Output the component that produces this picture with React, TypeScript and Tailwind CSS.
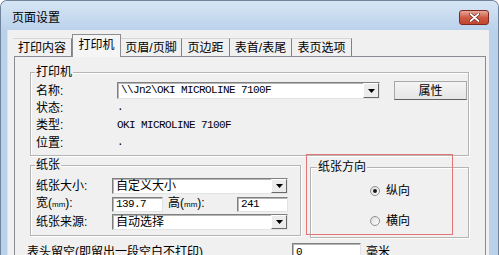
import React from 'react';

const cjk = "font-['Liberation_Sans','Noto_Sans_CJK_SC',sans-serif]";
const mono = "font-['Liberation_Mono','Courier_New',monospace] text-[11px] tracking-[-0.6px]";

const DropBtn: React.FC = () => (
  <div className="flex h-full w-[16px] items-center justify-center border-t border-l border-t-white border-l-white border-r border-b border-r-[#696969] border-b-[#696969] bg-[#ececec]">
    <svg width="7" height="4" viewBox="0 0 7 4">
      <path d="M0 0h7L3.5 4z" fill="#000" />
    </svg>
  </div>
);

interface FieldProps {
  w: string;
  h?: string;
  text: string;
  monoText?: boolean;
  drop?: boolean;
}

const Field: React.FC<FieldProps> = ({ w, h = 'h-[16px]', text, monoText, drop }) => (
  <div
    className={`flex ${w} ${h} items-stretch border border-t-[#808080] border-l-[#808080] border-r-[#e3e3e3] border-b-[#e3e3e3] bg-white shadow-[inset_1px_1px_0_#b5b5b5]`}
  >
    <div className={`flex flex-1 items-center overflow-hidden whitespace-nowrap pl-[3px] ${monoText ? mono : `${cjk} text-[12px]`} text-black`}>
      {text}
    </div>
    {drop && <DropBtn />}
  </div>
);

const GroupLabel: React.FC<{ text: string; left: string }> = ({ text, left }) => (
  <div className={`absolute top-[-8px] ${left} bg-[#f0f0f0] px-[1px] text-[12px] leading-[14px] text-black`}>{text}</div>
);

const Radio: React.FC<{ checked?: boolean; label: string }> = ({ checked, label }) => (
  <div className="flex h-[20px] items-center gap-[6px] pl-[59px]">
    <span className="flex h-[10px] w-[10px] items-center justify-center rounded-full border border-[#8f8f8f] bg-linear-to-br from-[#dcdcdc] to-white">
      {checked && <span className="h-[4px] w-[4px] rounded-full bg-[#1a1a1a]" />}
    </span>
    <span className="text-[12px] leading-[14px] text-black">{label}</span>
  </div>
);

const tabs = [
  { label: '打印内容', w: 'w-[59px]' },
  { label: '打印机', w: 'w-[49px]', active: true },
  { label: '页眉/页脚', w: 'w-[61px]' },
  { label: '页边距', w: 'w-[48px]' },
  { label: '表首/表尾', w: 'w-[62px]' },
  { label: '表页选项', w: 'w-[60px]' },
];

const mm = (
  <>
    (<span className="text-[8px]">mm</span>):
  </>
);

export default function App() {
  return (
    <div className={`h-[255px] w-[499px] overflow-hidden bg-white ${cjk}`}>
      <div className="flex flex-col rounded-t-[7px] border-t border-l border-r border-[#6f839b] bg-[#b9d1ea]">
        {/* Title bar */}
        <div className="flex h-[29px] shrink-0 items-center justify-between rounded-t-[6px] bg-linear-to-b from-[#d7e5f4] to-[#bad2eb] pt-[4px] pl-[11px] pr-[9px]">
          <span className="text-[12px] text-black">页面设置</span>
          <div className="flex h-[15px] w-[30px] items-center justify-center rounded-[3px] border border-[#7d2b22] bg-linear-to-b from-[#e6a797] via-[#cf5b45] to-[#c2452f]">
            <svg width="11" height="9" viewBox="0 0 11 9">
              <path d="M1.5 1l8 7M9.5 1l-8 7" stroke="#5a1a12" strokeWidth="3" strokeLinecap="round" />
              <path d="M1.5 1l8 7M9.5 1l-8 7" stroke="#fff" strokeWidth="1.8" strokeLinecap="round" />
            </svg>
          </div>
        </div>

        <div className="flex shrink-0 pl-[6px] pr-[8px]">
          {/* Client area */}
          <div className="flex w-[482px] shrink-0 flex-col border-l border-[#d8e4f0] bg-[#f0f0f0]">
            {/* Tabs */}
            <div className="flex h-[26px] shrink-0 items-end pl-[5px]">
              {tabs.map((t) =>
                t.active ? (
                  <div
                    key={t.label}
                    className={`relative z-10 mb-[-1px] flex h-[23px] ${t.w} items-start justify-center border-t border-l border-r border-[#8c8e94] bg-[#f5f5f5] pt-[3px] text-[12px] leading-[14px] text-black`}
                  >
                    {t.label}
                  </div>
                ) : (
                  <div
                    key={t.label}
                    className={`flex h-[18px] ${t.w} items-center justify-center border-t border-t-[#d6d6d6] border-r border-r-[#7f8186] bg-[#f0f0f0] text-[12px] leading-[14px] text-black`}
                  >
                    {t.label}
                  </div>
                )
              )}
            </div>

            {/* Panel */}
            <div className="relative ml-[6px] h-[220px] w-[472px] shrink-0 border border-[#898c95] bg-[#f0f0f0]">
              {/* Printer group */}
              <div className="relative mt-[15px] ml-[15px] h-[84px] w-[439px] border border-[#b4b4b4] pt-[9px] pl-[5px] shadow-[inset_1px_1px_0_#fff,1px_1px_0_#fff]">
                <GroupLabel text="打印机" left="left-[4px]" />
                <div className="flex h-[17px] items-center">
                  <div className="w-[81px] text-[12px] leading-[14px]">名称:</div>
                  <Field w="w-[263px]" h="h-[17px]" text="\\Jn2\OKI MICROLINE 7100F" monoText drop />
                  <div className="ml-[14px] flex h-[19px] w-[73px] items-center justify-center border border-[#a8a8a8] border-b-[#5e5e5e] bg-linear-to-b from-[#f4f4f4] to-[#e6e6e6] text-[12px] leading-[14px]">
                    属性
                  </div>
                </div>
                <div className="flex h-[17px] items-center">
                  <div className="w-[81px] text-[12px] leading-[14px]">状态:</div>
                  <span className={mono}>.</span>
                </div>
                <div className="flex h-[18px] items-center">
                  <div className="w-[81px] text-[12px] leading-[14px]">类型:</div>
                  <span className={mono}>OKI MICROLINE 7100F</span>
                </div>
                <div className="flex h-[17px] items-center">
                  <div className="w-[81px] text-[12px] leading-[14px]">位置:</div>
                  <span className={mono}>.</span>
                </div>
              </div>

              {/* Paper + orientation */}
              <div className="mt-[9px] ml-[15px] flex items-start">
                <div className="relative h-[71px] w-[271px] border border-[#b4b4b4] pt-[11px] pl-[5px] shadow-[inset_1px_1px_0_#fff,1px_1px_0_#fff]">
                  <GroupLabel text="纸张" left="left-[4px]" />
                  <div className="flex h-[18px] items-center">
                    <div className="w-[76px] text-[12px] leading-[14px]">纸张大小:</div>
                    <Field w="w-[176px]" text="自定义大小" drop />
                  </div>
                  <div className="flex h-[18px] items-center">
                    <div className="w-[76px] text-[12px] leading-[14px]">宽{mm}</div>
                    <Field w="w-[51px]" h="h-[15px]" text="139.7" monoText />
                    <div className="ml-[5px] w-[69px] text-[12px] leading-[14px]">高{mm}</div>
                    <Field w="w-[51px]" h="h-[15px]" text="241" monoText />
                  </div>
                  <div className="flex h-[18px] items-center">
                    <div className="w-[76px] text-[12px] leading-[14px]">纸张来源:</div>
                    <Field w="w-[176px]" text="自动选择" drop />
                  </div>
                </div>

                <div className="relative mt-[2px] ml-[9px] h-[71px] w-[159px] border border-[#b4b4b4] pt-[13px] shadow-[inset_1px_1px_0_#fff,1px_1px_0_#fff]">
                  <GroupLabel text="纸张方向" left="left-[6px]" />
                  <Radio checked label="纵向" />
                  <div className="h-[10px]" />
                  <Radio label="横向" />
                </div>
              </div>

              {/* Header margin row */}
              <div className="mt-[4px] flex h-[20px] items-center pl-[12px]">
                <div className="w-[265px] whitespace-nowrap text-[12px] leading-[14px]">表头留空(即留出一段空白不打印)</div>
                <Field w="w-[69px]" h="h-[18px]" text="0" monoText />
                <div className="ml-[5px] text-[12px] leading-[14px]">毫米</div>
              </div>

              {/* highlight box */}
              <div className="pointer-events-none absolute top-[97px] left-[291px] h-[81px] w-[147px] border border-[#e07575]" />
            </div>
          </div>
        </div>
      </div>
    </div>
  );
}
